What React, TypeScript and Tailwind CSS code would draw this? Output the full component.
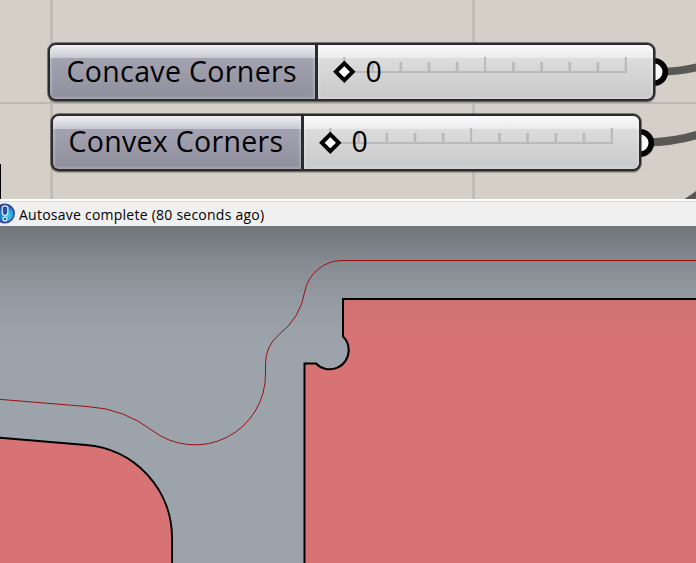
type SliderProps = {
  label: string;
  value: string;
  frame: string;
  labelWidth: string;
  labelText: string;
};

const TICKS = [0, 1, 2, 3, 4, 5, 6, 7, 8, 9, 10];

function Ruler() {
  return (
    <svg width="310" height="54" viewBox="0 0 310 54" className="absolute left-0 top-0">
      <g fill="#bababa">
        <rect x="27" y="26" width="282" height="2" />
        {TICKS.map((i) => (
          <rect
            key={i}
            x={25.2 + i * 28.15}
            y={i % 5 === 0 ? 12 : 17}
            width={i % 5 === 0 ? 2.2 : 2.7}
            height={i % 5 === 0 ? 15.6 : 10}
          />
        ))}
      </g>
      <path d="M26.3 18.4L34.7 26.8L26.3 35.2L17.9 26.8Z" fill="#fff" stroke="#000" strokeWidth="4" />
    </svg>
  );
}

function Gloss() {
  return (
    <>
      <div className="absolute inset-0 shadow-[inset_0_0_2px_2px_rgba(255,255,255,0.2)]" />
      <div className="absolute inset-x-0 top-0 h-[13px] bg-[linear-gradient(to_bottom,rgba(255,255,255,0.8),rgba(255,255,255,0.4))]" />
    </>
  );
}

function NumberSlider({ label, value, frame, labelWidth, labelText }: SliderProps) {
  return (
    <div className={`absolute ${frame}`}>
      <svg width="20" height="30" viewBox="0 0 20 30" className="absolute -right-[14px] top-[14px]">
        <circle cx="5" cy="15" r="11.3" fill="#fff" stroke="#000" strokeWidth="5.6" />
      </svg>
      <div className="relative flex h-full overflow-hidden rounded-[8px] border-2 border-[#292b2c] bg-[#292b2c] shadow-[0_0_0_1px_rgba(45,50,45,0.55),0_2px_1px_rgba(80,85,75,0.35)]">
        <div className={`relative flex items-center bg-[linear-gradient(to_bottom,#aaa9b9,#8f8e9c)] pb-[2px] ${labelWidth}`}>
          <Gloss />
          <span className={`relative whitespace-nowrap font-['Open_Sans',sans-serif] text-[28.5px] leading-none text-black ${labelText}`}>
            {label}
          </span>
        </div>
        <div className="relative ml-[3px] flex flex-1 items-center bg-[linear-gradient(to_bottom,#e3e3e3,#c8c8c8)] pb-[2px]">
          <Gloss />
          <Ruler />
          <span className="relative pl-[47.5px] font-['Open_Sans',sans-serif] text-[28.5px] leading-none text-black">{value}</span>
        </div>
      </div>
    </div>
  );
}

function Canvas() {
  return (
    <section className="relative h-[199px] shrink-0 overflow-hidden bg-[#d4d0c8]">
      <svg width="696" height="199" viewBox="0 0 696 199" className="absolute left-0 top-0">
        <g fill="#bcb9b2">
          <rect x="50.3" y="0" width="2.5" height="199" />
          <rect x="472.3" y="0" width="2.5" height="199" />
          <rect x="0" y="102" width="696" height="2" />
        </g>
        <rect x="0" y="164" width="1" height="35" fill="#000" />
        <g fill="none" stroke="#595854" strokeWidth="8">
          <path d="M660 71.8Q681 71.5 700 66.5" />
          <path d="M646 142.4Q675 142 700 134" />
          <path d="M680 206Q690 201 700 193" />
        </g>
      </svg>
      <NumberSlider
        label="Concave Corners"
        value="0"
        frame="left-[48px] top-[43px] h-[58px] w-[607px]"
        labelWidth="w-[265px]"
        labelText="pl-[16.5px] tracking-[0.35px]"
      />
      <NumberSlider
        label="Convex Corners"
        value="0"
        frame="left-[51px] top-[114px] h-[57px] w-[590px]"
        labelWidth="w-[248px]"
        labelText="pl-[15.5px] tracking-[0.3px]"
      />
    </section>
  );
}

function StatusBar() {
  return (
    <div className="flex h-[27px] shrink-0 items-center overflow-hidden border-t-2 border-white bg-[#f0f0f0] shadow-[inset_0_1px_0_#d9d9d9]">
      <svg width="16" height="21" viewBox="0 0 16 21" className="shrink-0">
        <defs>
          <radialGradient id="alert" cx="0.65" cy="0.6" r="0.6">
            <stop offset="0" stopColor="#3fd6ee" />
            <stop offset="0.55" stopColor="#2a8fd0" />
            <stop offset="1" stopColor="#1f3f9f" />
          </radialGradient>
        </defs>
        <circle cx="5" cy="10.5" r="9.3" fill="url(#alert)" stroke="#2b3f98" strokeWidth="1.3" />
        <path d="M2.2 4Q5 1.6 7.8 4V9.5Q7.5 12.5 5 12.5Q2.5 12.5 2.2 9.5Z" fill="#2a4fa5" stroke="#e6f0fa" strokeWidth="1.2" strokeLinejoin="round" />
        <circle cx="5" cy="16" r="1.9" fill="#2a4fa5" stroke="#e6f0fa" strokeWidth="1.2" />
      </svg>
      <span className="whitespace-nowrap pl-[3px] pt-[2px] font-['Open_Sans',sans-serif] text-[14px] leading-5 tracking-[0.24px] text-black">
        Autosave complete (80 seconds ago)
      </span>
    </div>
  );
}

function Viewport() {
  return (
    <section className="h-[337px] overflow-hidden bg-[linear-gradient(to_bottom,#70767a_0,#777d81_14px,#868c92_38px,#959ba2_75px,#9da3aa_115px)]">
      <svg width="696" height="337" viewBox="0 226 696 337" className="block">
        <defs>
          <linearGradient id="part" x1="0" y1="299" x2="0" y2="335" gradientUnits="userSpaceOnUse">
            <stop offset="0" stopColor="#d07173" />
            <stop offset="1" stopColor="#d77374" />
          </linearGradient>
        </defs>
        <g stroke="#000" strokeWidth="2">
          <path d="M700 299H343V336.5A19 19 0 0 1 348.7 350.2A19 19 0 0 1 316 363.5H304.5V570H700Z" fill="url(#part)" />
          <path d="M-4 437.3L86 445A93 93 0 0 1 172 538V570H-4Z" fill="#d77374" />
        </g>
        <path
          d="M-2 399.2L88 406.6A118 118 0 0 1 153 431A70.5 70.5 0 0 0 265.5 374V363.5A38.2 38.2 0 0 1 278.5 335A70.3 70.3 0 0 0 305 290.5A38.2 38.2 0 0 1 342 260.5H700"
          fill="none"
          stroke="#9b0f12"
          strokeWidth="1"
        />
      </svg>
    </section>
  );
}

export default function App() {
  return (
    <main className="flex h-[563px] w-[696px] flex-col overflow-hidden">
      <Canvas />
      <StatusBar />
      <Viewport />
    </main>
  );
}
